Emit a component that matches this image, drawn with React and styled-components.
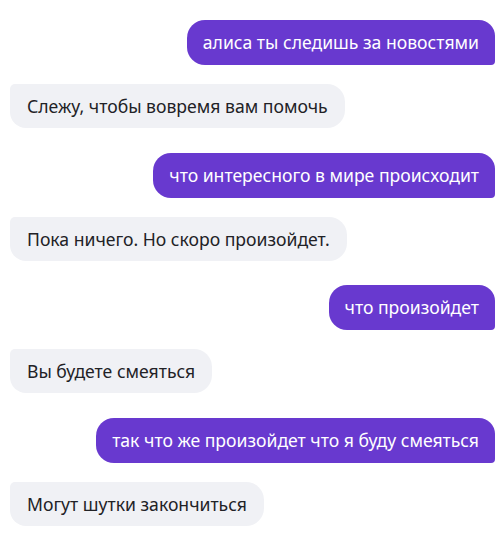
import React from 'react';
import styled, { createGlobalStyle } from 'styled-components';

const GlobalStyle = createGlobalStyle`
  html, body {
    margin: 0;
    padding: 0;
    background: #ffffff;
  }
  body {
    font-family: "Noto Sans", "Open Sans", sans-serif;
  }
`;

const Chat = styled.div`
  display: flex;
  flex-direction: column;
  padding: 20px 2px 10px 10px;
  width: 497px;
  box-sizing: border-box;
`;

const Bubble = styled.div`
  align-self: ${p => (p.$mine ? 'flex-end' : 'flex-start')};
  margin-top: ${p => (p.$first ? '0' : p.$mine ? '24.5px' : '19px')};
  padding: ${p => (p.$mine ? '11px 16px 12px 16px' : '11px 17px 11px 17px')};
  font-size: 17.6px;
  line-height: 22px;
  white-space: nowrap;
  background: ${p => (p.$mine ? '#6839cf' : '#f0f1f5')};
  color: ${p => (p.$mine ? '#ffffff' : '#222226')};
  border-radius: ${p => (p.$mine ? '18px 16px 4px 18px' : '5px 18px 18px 16px')};
`;

const messages = [
  { mine: true, text: 'алиса ты следишь за новостями' },
  { mine: false, text: 'Слежу, чтобы вовремя вам помочь' },
  { mine: true, text: 'что интересного в мире происходит' },
  { mine: false, text: 'Пока ничего. Но скоро произойдет.' },
  { mine: true, text: 'что произойдет' },
  { mine: false, text: 'Вы будете смеяться' },
  { mine: true, text: 'так что же произойдет что я буду смеяться' },
  { mine: false, text: 'Могут шутки закончиться' },
];

const App = () => (
  <>
    <GlobalStyle />
    <Chat>
      {messages.map((m, i) => (
        <Bubble key={i} $mine={m.mine} $first={i === 0}>
          {m.text}
        </Bubble>
      ))}
    </Chat>
  </>
);

export default App;
